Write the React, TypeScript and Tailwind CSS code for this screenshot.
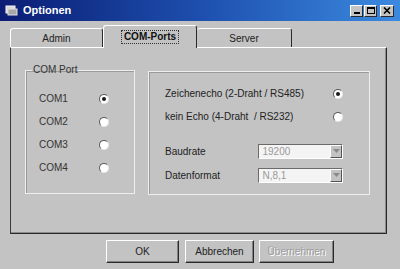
import React from "react";

const font = { fontFamily: '"Liberation Sans", Arial, sans-serif' };

const Radio = ({ checked }: { checked?: boolean }) => (
  <span className="flex h-[10px] w-[10px] shrink-0 items-center justify-center rounded-full border border-t-[#5a5a5a] border-l-[#5a5a5a] border-r-[#e8e8e8] border-b-[#e8e8e8] bg-white">
    {checked && <span className="h-[4px] w-[4px] rounded-full bg-[#1a1a1a]" />}
  </span>
);

const Combo = ({ value }: { value: string }) => (
  <div className="flex h-[15px] w-[85px] items-stretch border border-t-[#6a6a6a] border-l-[#6a6a6a] border-r-white border-b-white bg-[#f4f4f4]">
    <span className="flex-1 pl-[3px] text-[10px] leading-[13px] text-[#9a9a9a]">{value}</span>
    <span className="flex w-[12px] items-center justify-center border border-t-white border-l-white border-r-[#555] border-b-[#555] bg-[#c3c3c3]">
      <svg width="7" height="4" viewBox="0 0 7 4">
        <path d="M0 0h7L3.5 4z" fill="#8a8a8a" />
      </svg>
    </span>
  </div>
);

const Button = ({ label, width, disabled }: { label: string; width: string; disabled?: boolean }) => (
  <div
    className={`flex h-[23px] ${width} items-center justify-center border border-t-white border-l-white border-r-[#2a2a2a] border-b-[#2a2a2a] shadow-[inset_-1px_-1px_0_#808080] text-[10px] ${
      disabled ? "text-[#9a9a9a] [text-shadow:1px_1px_0_#fff]" : "text-[#222]"
    }`}
  >
    {label}
  </div>
);

const comPorts = ["COM1", "COM2", "COM3", "COM4"];

export default function App() {
  return (
    <div className="flex h-[269px] w-[400px] flex-col bg-[#c3c3c3]" style={font}>
      {/* title bar */}
      <div className="flex h-[21px] items-center bg-gradient-to-r from-[#0c1c74] via-[#1e4fae] to-[#3c8ae0] pl-[5px] pr-[6px]">
        <svg width="13" height="11" viewBox="0 0 13 11">
          <rect x="1" y="1" width="9" height="7" fill="#d8d8d8" stroke="#f4f4f4" strokeWidth="1" />
          <rect x="3" y="4" width="9" height="6" fill="#a8a8a8" stroke="#e0e0e0" strokeWidth="1" />
        </svg>
        <span className="ml-[5px] text-[11px] font-bold text-white">Optionen</span>
        <div className="ml-auto flex items-center gap-[1px]">
          <div className="flex h-[12px] w-[13px] items-end justify-center border border-t-white border-l-white border-r-[#2a2a2a] border-b-[#2a2a2a] bg-[#c3c3c3] pb-[2px]">
            <span className="h-[2px] w-[6px] bg-black" />
          </div>
          <div className="flex h-[12px] w-[13px] items-center justify-center border border-t-white border-l-white border-r-[#2a2a2a] border-b-[#2a2a2a] bg-[#c3c3c3]">
            <span className="h-[7px] w-[8px] border border-t-2 border-black" />
          </div>
          <div className="ml-[2px] flex h-[12px] w-[14px] items-center justify-center border border-t-white border-l-white border-r-[#2a2a2a] border-b-[#2a2a2a] bg-[#c3c3c3]">
            <svg width="8" height="7" viewBox="0 0 8 7">
              <path d="M1 0.5L7 6.5M7 0.5L1 6.5" stroke="#000" strokeWidth="1.6" />
            </svg>
          </div>
        </div>
      </div>

      {/* tabs */}
      <div className="mt-[4px] flex h-[22px] items-end pl-[10px]">
        <div className="flex h-[19px] w-[93px] items-center justify-center rounded-tl-[3px] rounded-tr-[3px] border-t border-l border-r border-t-white border-l-white border-r-[#2a2a2a] text-[10px] text-[#222]">
          Admin
        </div>
        <div className="relative z-10 -mb-[1px] flex h-[23px] w-[94px] items-center justify-center rounded-tl-[3px] rounded-tr-[3px] border-t border-l border-r border-t-white border-l-white border-r-[#2a2a2a] bg-[#c3c3c3] text-[10px] font-bold text-[#111]">
          <span className="border border-dotted border-[#333] px-[2px] leading-[12px]">COM-Ports</span>
        </div>
        <div className="flex h-[19px] w-[95px] items-center justify-center rounded-tl-[3px] rounded-tr-[3px] border-t border-r border-t-white border-r-[#2a2a2a] text-[10px] text-[#222]">
          Server
        </div>
      </div>

      {/* panel */}
      <div className="ml-[10px] flex h-[187px] w-[377px] items-start gap-[13px] border border-t-white border-l-[#3a3a3a] border-r-[#2a2a2a] border-b-[#2a2a2a] pl-[14px] pt-[16px] shadow-[inset_-1px_-1px_0_#8a8a8a]">
        <fieldset className="h-[130px] w-[110px] border border-[#eeeeee] shadow-[inset_1px_1px_0_#9a9a9a]">
          <legend className="ml-[6px] px-[1px] text-[10px] leading-[12px] text-[#333]">COM Port</legend>
          <div className="mt-[11px] flex flex-col">
            {comPorts.map((p, i) => (
              <div key={p} className="flex h-[23px] items-center pl-[13px]">
                <span className="w-[60px] text-[10px] text-[#333]">{p}</span>
                <Radio checked={i === 0} />
              </div>
            ))}
          </div>
        </fieldset>

        <div className="mt-[7px] flex h-[124px] w-[222px] flex-col border border-[#eeeeee] pl-[16px] pr-[26px] pt-[10px] shadow-[inset_1px_1px_0_#9a9a9a]">
          <div className="flex h-[23px] items-center justify-between text-[10px] text-[#222]">
            <span>Zeichenecho (2-Draht / RS485)</span>
            <Radio checked />
          </div>
          <div className="flex h-[23px] items-center justify-between text-[10px] text-[#222]">
            <span>kein Echo (4-Draht&nbsp; / RS232)</span>
            <Radio />
          </div>
          <div className="mt-[13px] flex h-[20px] items-center text-[10px] text-[#222]">
            <span className="w-[94px]">Baudrate</span>
            <Combo value="19200" />
          </div>
          <div className="mt-[4px] flex h-[20px] items-center text-[10px] text-[#222]">
            <span className="w-[94px]">Datenformat</span>
            <Combo value="N,8,1" />
          </div>
        </div>
      </div>

      {/* buttons */}
      <div className="mt-[6px] flex pl-[106px]">
        <Button label="OK" width="w-[73px]" />
        <div className="w-[6px]" />
        <Button label="Abbrechen" width="w-[69px]" />
        <div className="w-[5px]" />
        <Button label="Übernehmen" width="w-[75px]" disabled />
      </div>
    </div>
  );
}
